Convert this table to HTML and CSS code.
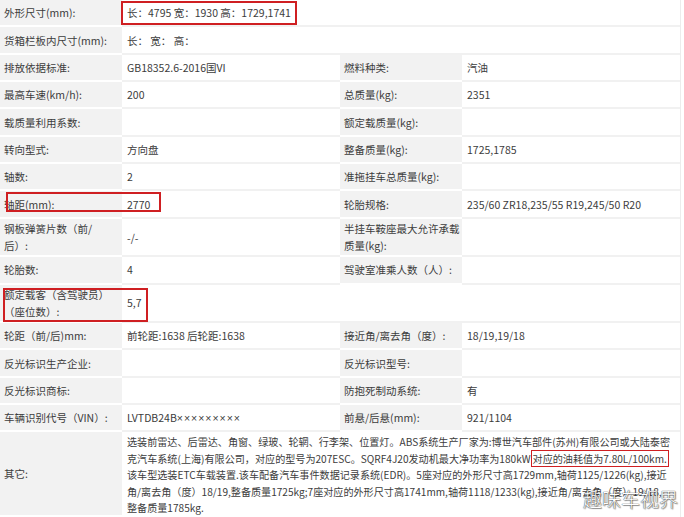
FILE: index.html
```html
<!DOCTYPE html>
<html lang="zh-CN">
<head>
    <meta charset="UTF-8">
    <meta name="viewport" content="width=device-width, initial-scale=1.0">
    <title>车辆参数</title>
    <link rel="stylesheet" href="styles.css">
</head>
<body>
    <main class="sheet">
        <table class="spec">
            <colgroup>
                <col class="c-label">
                <col class="c-value">
                <col class="c-label">
                <col class="c-value">
            </colgroup>
            <tr>
                <th>外形尺寸(mm):</th>
                <td colspan="3"><span class="mark">长：4795 宽：1930 高：1729,1741</span></td>
            </tr>
            <tr>
                <th>货箱栏板内尺寸(mm):</th>
                <td colspan="3">长： 宽： 高：</td>
            </tr>
            <tr>
                <th>排放依据标准:</th>
                <td>GB18352.6-2016国VI</td>
                <th>燃料种类:</th>
                <td>汽油</td>
            </tr>
            <tr>
                <th>最高车速(km/h):</th>
                <td>200</td>
                <th>总质量(kg):</th>
                <td>2351</td>
            </tr>
            <tr>
                <th>载质量利用系数:</th>
                <td></td>
                <th>额定载质量(kg):</th>
                <td></td>
            </tr>
            <tr>
                <th>转向型式:</th>
                <td>方向盘</td>
                <th>整备质量(kg):</th>
                <td>1725,1785</td>
            </tr>
            <tr>
                <th>轴数:</th>
                <td>2</td>
                <th>准拖挂车总质量(kg):</th>
                <td></td>
            </tr>
            <tr>
                <th class="boxed">
                    <div class="frame frame-wheelbase"></div>
                    轴距(mm):
                </th>
                <td>2770</td>
                <th>轮胎规格:</th>
                <td>235/60 ZR18,235/55 R19,245/50 R20</td>
            </tr>
            <tr class="tall">
                <th>钢板弹簧片数（前/<br>后）:</th>
                <td>-/-</td>
                <th>半挂车鞍座最大允许承载<br>质量(kg):</th>
                <td></td>
            </tr>
            <tr>
                <th>轮胎数:</th>
                <td>4</td>
                <th>驾驶室准乘人数（人）:</th>
                <td></td>
            </tr>
            <tr class="tall">
                <th class="boxed">
                    <div class="frame frame-seats"></div>
                    额定载客（含驾驶员）<br>（座位数）:
                </th>
                <td colspan="3">5,7</td>
            </tr>
            <tr>
                <th>轮距（前/后)mm:</th>
                <td>前轮距:1638 后轮距:1638</td>
                <th>接近角/离去角（度）:</th>
                <td>18/19,19/18</td>
            </tr>
            <tr>
                <th>反光标识生产企业:</th>
                <td></td>
                <th>反光标识型号:</th>
                <td></td>
            </tr>
            <tr>
                <th>反光标识商标:</th>
                <td></td>
                <th>防抱死制动系统:</th>
                <td>有</td>
            </tr>
            <tr>
                <th>车辆识别代号（VIN）:</th>
                <td>LVTDB24B<span class="mask">×××××××××</span></td>
                <th>前悬/后悬(mm):</th>
                <td>921/1104</td>
            </tr>
            <tr>
                <th>其它:</th>
                <td colspan="3" class="notes">选装前雷达、后雷达、角窗、绿玻、轮辋、行李架、位置灯。ABS系统生产厂家为:博世汽车部件(苏州)有限公司或大陆泰密<br>克汽车系统(上海)有限公司，对应的型号为207ESC。SQRF4J20发动机最大净功率为180kW<span class="mark-thin">对应的油耗值为7.80L/100km.</span><br>该车型选装ETC车载装置.该车配备汽车事件数据记录系统(EDR)。5座对应的外形尺寸高1729mm,轴荷1125/1226(kg),接近<br>角/离去角（度）18/19,整备质量1725kg;7座对应的外形尺寸高1741mm,轴荷1118/1233(kg),接近角/离去角（度）19/18,<br>整备质量1785kg.</td>
            </tr>
        </table>

        <div class="watermark">趣味车视界</div>
    </main>
</body>
</html>
```

FILE: styles.css
```css
body {
    margin: 0;
    background: #fff;
    font-family: "Noto Sans CJK SC", "Noto Sans", sans-serif;
    color: #3c3c3c;
}

.sheet {
    position: relative;
    width: 684px;
    height: 517px;
    overflow: hidden;
}

.spec {
    width: 680px;
    border-collapse: separate;
    border-spacing: 0;
    table-layout: fixed;
    font-size: 10.5px;
    line-height: 17px;
    border-right: 1px solid #ececec;

    .c-label {
        width: 122px;
    }

    .c-value {
        width: 218px;
    }

    th,
    td {
        height: 25.35px;
        padding: 0 5px;
        text-align: left;
        vertical-align: middle;
        white-space: nowrap;
    }

    th {
        padding-left: 4px;
        font-weight: 400;
        background: #f2f2f2;
        border-bottom: 2px solid #fff;
    }

    td {
        background: #fff;
        border-bottom: 2px solid #f1f1f1;
    }

    tr.tall th,
    tr.tall td {
        height: 36.5px;
    }
}

.mark {
    display: inline-block;
    margin-left: -6px;
    padding: 1px 4px 2px;
    line-height: 17px;
    border: 2px solid #cf1f22;
}

.mark-thin {
    border: 1px solid #cf1f22;
    padding: 0 1px;
}

.mask {
    font-family: "Liberation Sans", sans-serif;
    letter-spacing: 1px;
}

.boxed {
    position: relative;
}

.frame {
    position: absolute;
    border: 2px solid #cf1f22;
    pointer-events: none;
}

.frame-wheelbase {
    left: 6px;
    top: 1px;
    width: 151px;
    height: 16px;
}

.frame-seats {
    left: 3px;
    top: 3px;
    width: 141px;
    height: 30px;
}

.spec td.notes {
    height: 84px;
    padding: 1px 5px 0;
    font-size: 10.1px;
    line-height: 16.6px;
    border-bottom: 0;
}

.watermark {
    position: absolute;
    right: 6px;
    bottom: 5px;
    font-size: 19px;
    font-weight: 300;
    color: #fff;
    text-shadow: 0 0 1px #444, 0 0 1px #444, 1px 1px 1px rgba(0, 0, 0, 0.4);
}
```
